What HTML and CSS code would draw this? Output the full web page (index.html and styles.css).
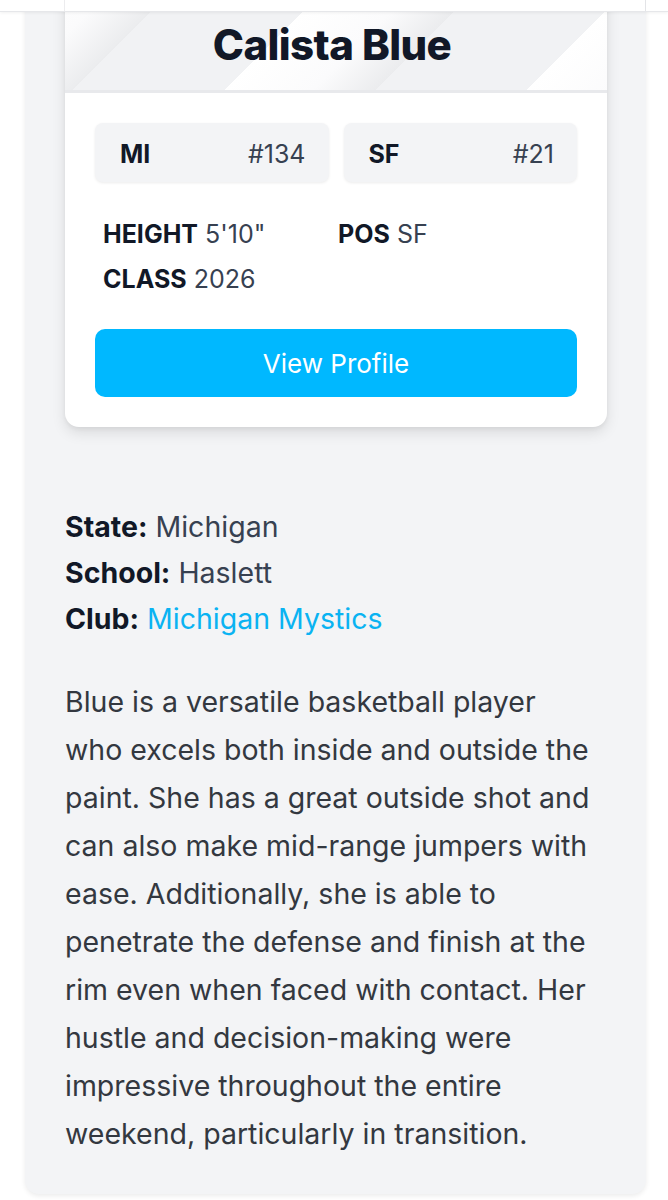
FILE: index.html
```html
<!DOCTYPE html>
<html lang="en">
<head>
<meta charset="utf-8">
<title>Calista Blue</title>
<link rel="stylesheet" href="styles.css">
</head>
<body>
<div class="topbar"><div class="topbar-inner"></div></div>
<main class="page">
  <section class="panel">
    <article class="card">
      <header class="card-head">
        <h1 class="name">Calista Blue</h1>
      </header>
      <div class="card-body">
        <div class="chips">
          <div class="chip"><span class="chip-key">MI</span><span class="chip-val">#134</span></div>
          <div class="chip"><span class="chip-key">SF</span><span class="chip-val">#21</span></div>
        </div>
        <div class="stats">
          <div class="stat"><b>HEIGHT</b> 5'10"</div>
          <div class="stat"><b>POS</b> SF</div>
          <div class="stat"><b>CLASS</b> 2026</div>
        </div>
        <a class="btn" href="#">View Profile</a>
      </div>
    </article>

    <div class="info">
      <div class="info-row"><b>State:</b> Michigan</div>
      <div class="info-row"><b>School:</b> Haslett</div>
      <div class="info-row"><b>Club:</b> <a class="link" href="#">Michigan Mystics</a></div>
    </div>

    <p class="bio">Blue is a versatile basketball player who excels both inside and outside the paint. She has a great outside shot and can also make mid-range jumpers with ease. Additionally, she is able to penetrate the defense and finish at the rim even when faced with contact. Her hustle and decision-making were impressive throughout the entire weekend, particularly in transition.</p>
  </section>
</main>
</body>
</html>
```
FILE: styles.css
```css
* { box-sizing: border-box; }
html, body { margin: 0; padding: 0; background: #ffffff; }
body {
  font-family: Inter, "Noto Sans", "Liberation Sans", sans-serif;
  color: #374151;
  overflow: hidden;
  height: 1200px;
}

.topbar {
  position: fixed;
  top: 0; left: 0; right: 0;
  height: 12px;
  background: #ffffff;
  border-bottom: 1px solid #e6e7ea;
  box-shadow: 0 1px 3px rgba(0,0,0,0.06);
  z-index: 10;
}
.topbar-inner {
  height: 100%;
  margin-left: 64px;
  width: 582px;
  border-left: 1px solid #ececee;
  border-right: 1px solid #e3e4e7;
}

.page {
  padding: 0 22px 0 25px;
}

.panel {
  margin-top: -30px;
  background: #f3f4f6;
  border-radius: 0 0 14px 14px;
  box-shadow: 0 2px 5px rgba(0,0,0,0.08);
  padding: 0 39px 36px 40px;
}

.card {
  background: #ffffff;
  border-radius: 0 0 14px 14px;
  box-shadow: 0 6px 14px rgba(0,0,0,0.10), 0 2px 4px rgba(0,0,0,0.05);
  overflow: hidden;
}

.card-head {
  padding: 50px 0 20px;
  border-bottom: 3px solid #e8e9ec;
  background:
    repeating-linear-gradient(135deg,
      #f1f2f4 90.5px, #f1f2f4 197.5px,
      #ffffff 197.5px, #fbfbfc 260px, #ebecee 304.5px);
}
.name {
  margin: 0 8px 0 0;
  text-align: center;
  font-size: 42px;
  line-height: 50px;
  font-weight: 800;
  letter-spacing: -0.6px;
  color: #111827;
}

.card-body {
  padding: 30px 30px 30px;
}

.chips {
  display: grid;
  grid-template-columns: 1fr 1fr;
  gap: 15px;
}
.chip {
  display: flex;
  justify-content: space-between;
  align-items: center;
  height: 59px;
  padding: 2px 23px 0 25px;
  background: #f3f4f6;
  border-radius: 8px;
  box-shadow: 0 1px 3px rgba(0,0,0,0.08);
  font-size: 25px;
}
.chip-key { font-weight: 700; color: #111827; }
.chip-val { color: #374151; }

.stats {
  display: grid;
  grid-template-columns: 235px 1fr;
  row-gap: 0;
  padding: 30px 8px 0;
  font-size: 25px;
  line-height: 45px;
}
.stat b { font-weight: 700; color: #111827; }

.btn {
  display: flex;
  align-items: center;
  justify-content: center;
  margin-top: 27px;
  height: 68px;
  background: #00b8ff;
  color: #ffffff;
  border-radius: 10px;
  text-decoration: none;
  font-size: 26px;
  font-weight: 400;
}

.info {
  padding-top: 77px;
  font-size: 28.5px;
  line-height: 46px;
}
.info-row b { font-weight: 700; color: #111827; }
.link { color: #0ab3f2; text-decoration: none; }

.bio {
  margin: 36px 0 0;
  max-width: 534px;
  font-size: 28.5px;
  line-height: 48px;
  color: #333840;
}
```
